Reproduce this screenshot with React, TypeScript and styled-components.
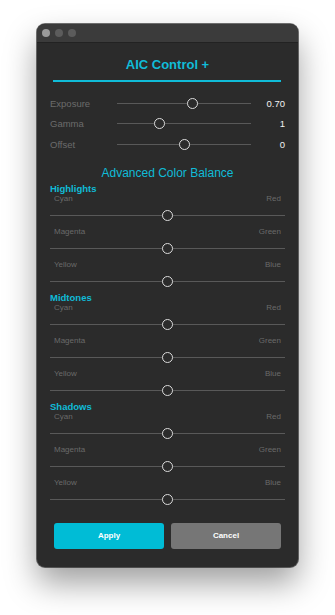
import React from "react";
import styled, { createGlobalStyle } from "styled-components";

const GlobalStyle = createGlobalStyle`
  body {
    margin: 0;
    background: #ffffff;
    font-family: "Liberation Sans", Arial, sans-serif;
  }
`;

const Page = styled.div`
  padding: 24px 0 48px 37px;
`;

const Window = styled.div`
  width: 261px;
  background: #2b2b2b;
  border-radius: 8px;
  overflow: hidden;
  box-shadow: 0 0 0 1px rgba(0, 0, 0, 0.55), 0 16px 32px rgba(0, 0, 0, 0.38);
`;

const TitleBar = styled.div`
  height: 19px;
  background: #3b3b3b;
  display: flex;
  align-items: center;
  gap: 5px;
  padding-left: 5px;
  border-bottom: 1px solid #222;
  box-sizing: border-box;
`;

const Dot = styled.span<{ $light?: boolean }>`
  width: 8px;
  height: 8px;
  border-radius: 50%;
  background: ${(p) => (p.$light ? "#9b9b9b" : "#5c5c5c")};
`;

const Content = styled.div`
  padding: 13px 13px 18px;
  display: flex;
  flex-direction: column;
`;

const Title = styled.div`
  color: #10bcd8;
  font-size: 13px;
  font-weight: bold;
  line-height: 17px;
  text-align: center;
`;

const Underline = styled.div`
  height: 2px;
  background: #10bcd8;
  margin: 7px 4px 11px 3px;
`;

const MainRow = styled.div`
  display: grid;
  grid-template-columns: 67px 134px 1fr;
  align-items: center;
  height: 20.5px;
`;

const RowLabel = styled.span`
  color: #6c6c6c;
  font-size: 9.5px;
`;

const RowValue = styled.span`
  color: #f2f2f2;
  font-size: 9.5px;
  text-align: right;
`;

const Track = styled.div<{ $height: number }>`
  position: relative;
  height: ${(p) => p.$height}px;
  &::before {
    content: "";
    position: absolute;
    left: 0;
    right: 0;
    top: 50%;
    height: 1px;
    margin-top: -0.5px;
    background: #595959;
  }
`;

const Thumb = styled.span`
  position: absolute;
  top: 50%;
  width: 11px;
  height: 11px;
  margin: -5.5px 0 0 -5.5px;
  box-sizing: border-box;
  border: 1.5px solid #dcdcdc;
  border-radius: 50%;
  background: #2b2b2b;
`;

const SectionTitle = styled.div`
  color: #10bcd8;
  font-size: 12px;
  line-height: 15px;
  text-align: center;
  margin-top: 11px;
  margin-bottom: 3px;
`;

const GroupTitle = styled.div`
  color: #10bcd8;
  font-size: 9.5px;
  font-weight: bold;
  line-height: 10px;
`;

const ColorLabels = styled.div`
  display: flex;
  justify-content: space-between;
  padding: 0 4px;
  color: #6a6a6a;
  font-size: 8px;
  line-height: 10px;
`;

const Buttons = styled.div`
  display: flex;
  gap: 7px;
  margin: 12px 4px 0;
`;

const Button = styled.button<{ $primary?: boolean }>`
  flex: 1;
  height: 26px;
  border: none;
  border-radius: 3px;
  background: ${(p) => (p.$primary ? "#00bcd6" : "#767676")};
  color: #ffffff;
  font-family: "Liberation Sans", Arial, sans-serif;
  font-size: 8px;
  font-weight: bold;
  padding: 0;
`;

function Slider({ value, height }: { value: number; height: number }) {
  return (
    <Track $height={height}>
      <Thumb style={{ left: `${value * 100}%` }} />
    </Track>
  );
}

const mainControls = [
  { label: "Exposure", value: "0.70", pos: 0.567 },
  { label: "Gamma", value: "1", pos: 0.32 },
  { label: "Offset", value: "0", pos: 0.5 },
];

const pairs = [
  ["Cyan", "Red"],
  ["Magenta", "Green"],
  ["Yellow", "Blue"],
];

const groups = ["Highlights", "Midtones", "Shadows"];

export default function App() {
  return (
    <Page>
      <GlobalStyle />
      <Window>
        <TitleBar>
          <Dot $light />
          <Dot />
          <Dot />
        </TitleBar>
        <Content>
          <Title>AIC Control +</Title>
          <Underline />
          {mainControls.map((c) => (
            <MainRow key={c.label}>
              <RowLabel>{c.label}</RowLabel>
              <Slider value={c.pos} height={12} />
              <RowValue>{c.value}</RowValue>
            </MainRow>
          ))}
          <SectionTitle>Advanced Color Balance</SectionTitle>
          {groups.map((g) => (
            <div key={g}>
              <GroupTitle>{g}</GroupTitle>
              {pairs.map(([a, b]) => (
                <div key={a}>
                  <ColorLabels>
                    <span>{a}</span>
                    <span>{b}</span>
                  </ColorLabels>
                  <Slider value={0.5} height={23} />
                </div>
              ))}
            </div>
          ))}
          <Buttons>
            <Button $primary>Apply</Button>
            <Button>Cancel</Button>
          </Buttons>
        </Content>
      </Window>
    </Page>
  );
}
